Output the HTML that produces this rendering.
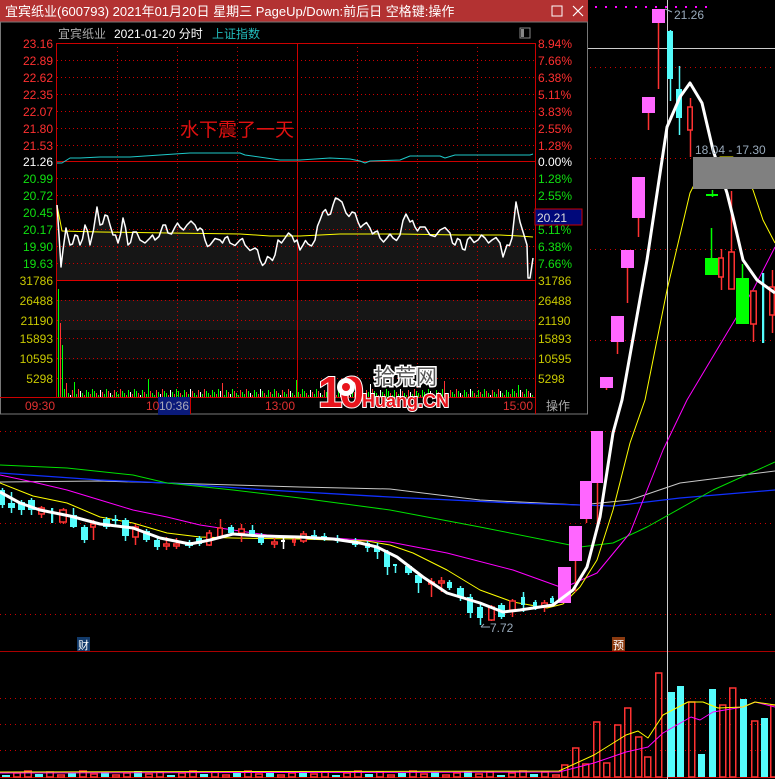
<!DOCTYPE html>
<html><head><meta charset="utf-8">
<style>
html,body{margin:0;padding:0;background:#000;width:775px;height:779px;overflow:hidden}
svg{display:block}
text{font-family:"Liberation Sans","Noto Sans CJK SC",sans-serif}
</style></head>
<body>
<svg id="s" width="775" height="779" viewBox="0 0 775 779" xmlns="http://www.w3.org/2000/svg">
<rect width="775" height="779" fill="#000"/>
<g id="main"></g>
<rect x="0" y="0" width="588" height="415" fill="#000"/>
<g id="intra"></g>
<rect x="0" y="0" width="588" height="22" fill="#b33232"/>
<text x="5" y="16" fill="#fff" font-size="13">宜宾纸业(600793) 2021年01月20日 星期三 PageUp/Down:前后日 空格键:操作</text>
<rect x="552" y="6" width="10" height="10" fill="none" stroke="#fff" stroke-width="1"/>
<path d="M573 6 L583 16 M583 6 L573 16" stroke="#fff" stroke-width="1.2"/>
<rect x="0.5" y="22" width="587" height="392" fill="none" stroke="#777" stroke-width="1"/>
<text x="58" y="38" fill="#aaa" font-size="12">宜宾纸业</text>
<text x="114" y="38" fill="#fff" font-size="12">2021-01-20 分时</text>
<text x="212" y="38" fill="#2bb" font-size="12">上证指数</text>
<rect x="520" y="28" width="10" height="10" fill="none" stroke="#888"/>
<rect x="521" y="29" width="3" height="8" fill="#888"/>
<g id="labels" font-size="12"></g>
<text x="180" y="136" fill="#e01010" font-size="19">水下震了一天</text>
<rect x="535" y="209" width="47" height="16" fill="#00087a" stroke="#c00" stroke-width="1"/>
<text x="537" y="222" fill="#ddd" font-size="12">20.21</text>
<line x1="0" y1="397.5" x2="535" y2="397.5" stroke="#c00"/>
<rect x="158" y="397" width="32" height="18" fill="#0a1a7a"/>
<line x1="190.5" y1="397" x2="190.5" y2="414" stroke="#c00"/>
<line x1="535.5" y1="397" x2="535.5" y2="414" stroke="#c00"/>
<text x="25" y="410" fill="#e03030" font-size="12">09:30</text>
<text x="146" y="410" fill="#e03030" font-size="12">10</text>
<text x="159" y="410" fill="#aab" font-size="12">10:36</text>
<text x="265" y="410" fill="#e03030" font-size="12">13:00</text>
<text x="503" y="410" fill="#e03030" font-size="12">15:00</text>
<text x="546" y="410" fill="#aaa" font-size="12">操作</text>
<g font-weight="bold">
<text x="318" y="407" fill="#e8141c" stroke="#fff" stroke-width="2" paint-order="stroke" font-size="44" letter-spacing="-3">10</text>
<circle cx="346" cy="387" r="9" fill="#fff"/>
<circle cx="346" cy="387" r="4" fill="#e8141c"/>
<text x="374" y="384" fill="#555" stroke="#fff" stroke-width="3" paint-order="stroke" font-size="21" font-weight="normal">拾荒网</text>
<text x="362" y="407" fill="#e8141c" stroke="#fff" stroke-width="2" paint-order="stroke" font-size="18">Huang.CN</text>
</g>
<text x="674" y="19" fill="#9ab" font-size="12">21.26</text>
<path d="M665 9 L672 12" stroke="#9ab"/>
<text x="490" y="632" fill="#9ab" font-size="12">7.72</text>
<path d="M481 627 L490 627 M481 627 L484 624" stroke="#9ab"/>
<rect x="693" y="157" width="82" height="32" fill="#808080"/>
<text x="695" y="154" fill="#9ab" font-size="12">18.04 - 17.30</text>
<rect x="77" y="637" width="13" height="14" fill="#123a6a"/>
<text x="78" y="649" fill="#fff" font-size="11">财</text>
<rect x="612" y="637" width="13" height="14" fill="#8a3a10"/>
<text x="613" y="649" fill="#fff" font-size="11">预</text>
</svg>
<script>
(function(){
var S='http://www.w3.org/2000/svg';
function add(g,tag,a){var e=document.createElementNS(S,tag);for(var k in a)e.setAttribute(k,a[k]);document.getElementById(g).appendChild(e);return e;}
function pl(g,pts,c,w){add(g,'polyline',{points:pts.map(function(p){return p.join(',')}).join(' '),fill:'none',stroke:c,'stroke-width':w||1,'stroke-linejoin':'round'});}
var R='#ff3232',P='#ff66ff',C='#54fcfc',G='#00ff00';
[67,158,249,340,431,523,614].forEach(function(y){add('main','line',{x1:0,y1:y+.5,x2:775,y2:y+.5,stroke:'#c00','stroke-dasharray':'1 4'});});
[698,724,750].forEach(function(y){add('main','line',{x1:0,y1:y+.5,x2:775,y2:y+.5,stroke:'#c00','stroke-dasharray':'1 4'});});
add('main','line',{x1:0,y1:651.5,x2:775,y2:651.5,stroke:'#a00'});
add('main','line',{x1:0,y1:777.5,x2:775,y2:777.5,stroke:'#c00'});
add('main','line',{x1:667.5,y1:0,x2:667.5,y2:779,stroke:'#ccc'});
add('main','line',{x1:588,y1:48.5,x2:775,y2:48.5,stroke:'#ccc'});
for(var x=595;x<712;x+=10)add('main','rect',{x:x,y:6,width:2,height:2,fill:'#f0f'});
pl('main',[[0,482],[100,481],[200,484],[300,487],[390,489],[480,500],[580,505],[630,500],[680,483],[775,471]],'#c8c8c8');
pl('main',[[0,473],[100,480],[167,483],[267,490],[390,497],[513,503],[613,506],[680,498],[775,490]],'#1030ff',1.3);
pl('main',[[0,465],[67,468],[133,475],[167,483],[233,490],[300,498],[390,510],[480,527],[580,547],[613,543],[647,527],[713,490],[775,462]],'#00e000');
pl('main',[[0,475],[33,482],[67,490],[100,500],[133,510],[167,517],[200,525],[233,530],[267,535],[300,537],[333,538],[390,542],[447,553],[513,570],[563,588],[597,573],[630,533],[663,450],[687,400],[727,333],[753,290],[775,247]],'#ff00ff');
pl('main',[[0,483],[33,496],[67,503],[100,517],[133,523],[167,533],[200,537],[233,538],[300,539],[367,541],[390,545],[413,553],[447,570],[480,590],[513,602],[547,608],[563,604],[580,587],[597,560],[613,510],[630,443],[645,400],[667,290],[690,193],[700,173],[720,157],[733,157],[753,190],[763,220],[775,243]],'#ffff00');
var cd=[[0,5,490,505,488,508,'c'],[8,7,503,508,492,513,'c'],[18,7,502,510,500,515,'c'],[28,7,500,510,498,515,'c'],[38,7,508,514,506,518,'r'],[51,2,508,523,508,523,'c'],[59,8,510,522,508,524,'r'],[70,7,515,527,508,528,'c'],[81,7,527,540,525,543,'c'],[90,6,524,527,520,540,'r'],[103,7,519,527,517,529,'c'],[112,6,519,521,515,527,'c'],[122,7,520,536,518,541,'c'],[132,7,527,537,524,545,'r'],[143,7,531,540,529,542,'c'],[154,6,540,547,538,550,'c'],[163,7,544,546,537,550,'r'],[173,7,544,546,538,549,'r'],[185,8,542,546,540,548,'c'],[196,6,538,544,536,546,'c'],[206,6,533,545,530,546,'r'],[217,6,528,537,519,539,'r'],[228,6,527,533,525,535,'c'],[238,7,529,533,524,542,'r'],[249,6,530,535,525,537,'c'],[258,6,535,543,533,545,'c'],[271,7,542,544,538,548,'r'],[281,4,540,542,538,549,'w'],[292,4,540,542,537,546,'r'],[300,7,534,541,531,543,'r'],[311,6,535,538,530,540,'c'],[321,6,536,539,533,541,'c'],[335,5,538,541,535,543,'c'],[352,6,541,545,538,547,'c'],[365,5,543,548,541,552,'c'],[374,6,547,552,543,559,'c'],[384,6,552,567,550,575,'c'],[393,4,564,566,564,573,'c'],[405,7,566,573,564,575,'c'],[415,7,575,583,573,593,'c'],[428,7,582,584,578,597,'r'],[438,7,581,583,577,592,'r'],[447,5,582,588,580,590,'c'],[457,7,588,597,586,601,'c'],[467,6,597,613,594,618,'c'],[477,6,607,618,604,625,'c'],[488,7,607,620,605,621,'r'],[498,7,605,617,603,619,'c'],[509,7,601,610,599,617,'r'],[521,4,597,605,592,612,'c'],[533,4,602,608,600,610,'c'],[541,7,603,607,600,612,'r'],[550,4,598,603,596,605,'c'],
[558,13,567,603,567,603,'p'],[569,13,526,561,526,592,'p'],[580,12,481,519,481,523,'p'],[591,12,431,483,431,530,'p'],[600,13,377,388,377,390,'p'],[611,13,316,342,316,354,'p'],[621,13,250,268,250,303,'p'],[632,13,177,218,177,237,'p'],[642,13,97,113,97,130,'p'],[652,13,9,23,9,89,'p'],[667,6,31,79,30,101,'c'],[676,6,89,118,66,135,'c'],[687,6,107,130,98,157,'r'],[706,12,194,196,190,197,'g'],[705,13,258,275,228,275,'g'],[718,6,258,277,249,290,'r'],[728,7,252,289,191,289,'r'],[736,13,278,324,264,324,'g'],[750,7,291,324,291,342,'r'],[762,2,273,343,273,343,'c'],[769,6,287,315,270,333,'r']];
cd.forEach(function(c){var x=c[0],w=c[1],t=c[6],col=t=='p'?P:t=='r'?R:t=='c'?C:t=='g'?G:'#fff';var mx=x+Math.floor(w/2);
add('main','line',{x1:mx+.5,y1:c[4],x2:mx+.5,y2:c[5],stroke:t=='p'?R:col,'stroke-width':1.5});
if(t=='r')add('main','rect',{x:x+.75,y:c[2],width:w-1.5,height:Math.max(1,c[3]-c[2]),fill:'#000',stroke:col,'stroke-width':1.5});
else add('main','rect',{x:x,y:c[2],width:w,height:Math.max(2,c[3]-c[2]),fill:col});});
pl('main',[[0,492],[20,503],[40,510],[70,516],[100,524],[133,528],[160,538],[190,544],[210,540],[233,534],[260,536],[300,537],[333,539],[360,543],[377,547],[397,557],[423,577],[447,593],[480,603],[503,612],[520,610],[553,605],[573,590],[587,567],[600,517],[613,433],[622,400],[647,260],[667,127],[680,97],[690,83],[702,103],[713,150],[727,193],[733,217],[743,260],[757,280],[775,293]],'#fff',3);
for(var i=0;i<51;i++){var bx=i*11+2,h=2+((i*7)%5),cy=(i%3==0);if(bx>555)break;
 if(cy)add('main','rect',{x:bx,y:777-h,width:8,height:h,fill:C});else add('main','rect',{x:bx+.75,y:777-h,width:6.5,height:h,fill:'none',stroke:R,'stroke-width':1.5});}
var vb=[[561,765,'r'],[572,748,'r'],[582,764,'r'],[593,722,'r'],[603,763,'r'],[614,725,'r'],[624,708,'r'],[635,737,'r'],[644,757,'r'],[655,673,'r'],[668,692,'c'],[677,686,'c'],[688,702,'r'],[698,754,'c'],[709,689,'c'],[719,705,'r'],[729,688,'r'],[740,699,'c'],[751,721,'r'],[761,718,'c'],[770,705,'r']];
vb.forEach(function(v){if(v[2]=='c')add('main','rect',{x:v[0],y:v[1],width:7,height:777-v[1],fill:C});else add('main','rect',{x:v[0]+.75,y:v[1],width:6,height:777-v[1],fill:'none',stroke:R,'stroke-width':1.5});});
pl('main',[[0,773],[559,772],[594,763],[626,752],[648,747],[663,733],[691,717],[700,720],[713,712],[743,707],[755,702],[775,707]],'#ff00ff');
pl('main',[[0,772],[559,771],[594,755],[626,735],[638,731],[648,738],[663,715],[688,702],[703,702],[718,708],[743,707],[755,702],[775,705]],'#ffff00');
var I='intra';
add(I,'rect',{x:57,y:300,width:478,height:30,fill:'#161616'});
add(I,'rect',{x:57,y:330,width:478,height:30,fill:'#0c0c0c'});
var pr=[[57,205],[59,235],[61,267],[63,250],[66,228],[70,245],[75,235],[80,245],[85,225],[90,245],[97,207],[100,225],[105,215],[110,225],[113,235],[118,243],[123,218],[128,245],[133,232],[140,240],[150,238],[155,240],[163,225],[168,233],[175,227],[180,227],[187,225],[195,225],[200,228],[205,240],[210,245],[220,240],[225,238],[230,243],[240,240],[245,245],[255,248],[260,260],[265,263],[270,258],[275,255],[278,240],[285,238],[292,236],[297,240],[300,250],[303,245],[308,244],[315,240],[320,220],[323,212],[328,215],[333,205],[338,199],[342,202],[346,213],[352,212],[358,222],[363,225],[370,228],[375,232],[380,238],[387,238],[393,238],[400,235],[406,214],[410,222],[415,227],[420,227],[430,235],[440,230],[450,233],[455,245],[460,240],[465,250],[470,237],[478,240],[485,238],[492,240],[500,243],[503,257],[507,245],[512,238],[516,202],[520,222],[524,235],[527,245],[528,278],[530,278],[533,258]];
var pj=[];for(var k=0;k<pr.length-1;k++){var a=pr[k],b=pr[k+1];pj.push(a);var mx=(a[0]+b[0])/2,my=(a[1]+b[1])/2+((k%2)?4:-4);if(b[0]-a[0]>4)pj.push([mx,my]);}pj.push(pr[pr.length-1]);
add(I,'polygon',{points:'57,280 '+pj.map(function(p){return p.join(',')}).join(' ')+' 533,280',fill:'#161616'});
[43,60,77,94,111,128,145,161,178,195,212,229,246,263].forEach(function(y){add(I,'line',{x1:57,y1:y+.5,x2:535,y2:y+.5,stroke:'#c00','stroke-dasharray':'1 3'});});
[300,320,338,358,378].forEach(function(y){add(I,'line',{x1:57,y1:y+.5,x2:535,y2:y+.5,stroke:'#c00','stroke-dasharray':'1 3'});});
[117,177,237,357,417,477].forEach(function(x){add(I,'line',{x1:x+.5,y1:43,x2:x+.5,y2:397,stroke:'#c00','stroke-dasharray':'1 3'});});
add(I,'line',{x1:297.5,y1:43,x2:297.5,y2:397,stroke:'#c00'});
add(I,'line',{x1:56.5,y1:43,x2:56.5,y2:397,stroke:'#c00'});
add(I,'line',{x1:535.5,y1:43,x2:535.5,y2:397,stroke:'#c00'});
add(I,'line',{x1:57,y1:43.5,x2:535,y2:43.5,stroke:'#c00'});
add(I,'line',{x1:57,y1:161.5,x2:535,y2:161.5,stroke:'#c00'});
add(I,'line',{x1:57,y1:280.5,x2:535,y2:280.5,stroke:'#d00'});
pl(I,[[57,163],[62,163],[70,158],[80,158],[100,157],[130,157],[160,155],[190,153],[210,153],[240,153],[245,155],[280,160],[300,160],[330,158],[350,159],[360,161],[365,163],[370,161],[400,160],[410,156],[440,156],[445,158],[455,155],[530,155],[533,154]],'#1ec8c8');
pl(I,[[57,205],[62,231],[100,232],[170,233],[240,234],[270,236],[300,236],[340,234],[400,234],[460,235],[500,235],[520,236],[533,237]],'#ffff00');
pl(I,pj,'#fff',1.5);
var big={58:289,60:323,62:345,63:360,65:380,66:383,527:352,531:345};
for(var vx=58;vx<533;vx+=2){var tp=big[vx]||(397-(2+((vx*13)%7)+((vx%37==0)?10:0)));add(I,'line',{x1:vx+.5,y1:tp,x2:vx+.5,y2:397,stroke:(vx*7)%3==0?R:(vx%5==0?'#fff':G)});}
var L=[['23.16',43,'#ff3030'],['22.89',60,'#ff3030'],['22.62',77,'#ff3030'],['22.35',94,'#ff3030'],['22.07',111,'#ff3030'],['21.80',128,'#ff3030'],['21.53',145,'#ff3030'],['21.26',161,'#fff'],['20.99',178,'#10e010'],['20.72',195,'#10e010'],['20.45',212,'#10e010'],['20.17',229,'#10e010'],['19.90',246,'#10e010'],['19.63',263,'#10e010'],['31786',280,'#c8c800'],['26488',300,'#c8c800'],['21190',320,'#c8c800'],['15893',338,'#c8c800'],['10595',358,'#c8c800'],['5298',378,'#c8c800']];
var RL=['8.94%','7.66%','6.38%','5.11%','3.83%','2.55%','1.28%','0.00%','1.28%','2.55%','3.83%','5.11%','6.38%','7.66%'];
L.forEach(function(l,i){var t=add('labels','text',{x:53,y:l[1]+5,fill:l[2],'text-anchor':'end'});t.textContent=l[0];
var rt=add('labels','text',{x:538,y:l[1]+5,fill:i<14?l[2]:'#c8c800'});rt.textContent=i<14?RL[i]:l[0];});
})();
</script>
</body></html>
